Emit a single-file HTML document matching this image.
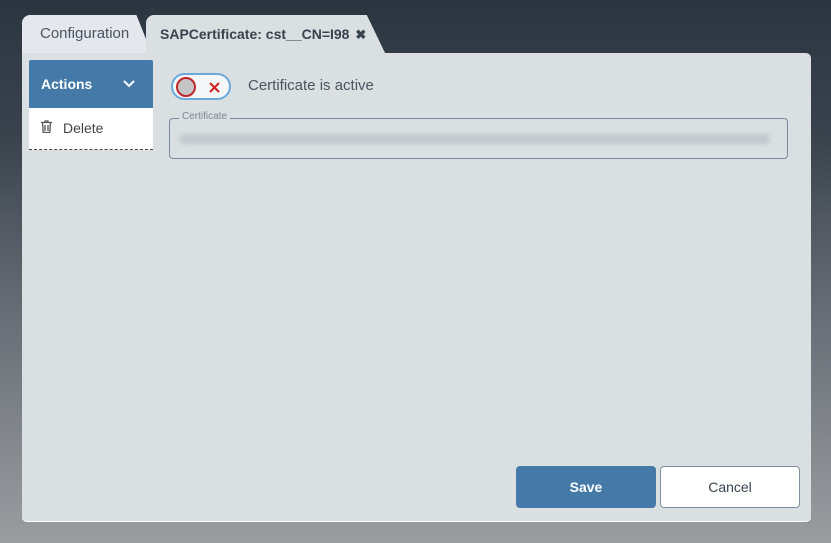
<!DOCTYPE html>
<html><head><style>
*{box-sizing:border-box;margin:0;padding:0}
body{width:831px;height:543px;overflow:hidden;font-family:"Liberation Sans",sans-serif;background:linear-gradient(180deg,#2b3540 0%,#3a434d 25%,#6a7078 60%,#9a9da0 100%);position:relative}
.tab1{position:absolute;left:22px;top:15px;width:130px;height:39px;background:#e4e7ee;color:#4a5560;font-size:15px;padding:10px 0 0 18px;clip-path:polygon(0 0,88% 0,100% 100%,0 100%);border-radius:8px 8px 0 0}
.tab2{position:absolute;left:146px;top:15px;width:240px;height:40px;background:#dadfe2;border-radius:8px 8px 0 0;clip-path:polygon(0 0,92% 0,100% 100%,0 100%);color:#39434d;font-size:14px;font-weight:bold;padding:11px 0 0 14px;white-space:nowrap}
.panel{position:absolute;left:22px;top:53px;width:789px;height:468px;background:#dadfe2;border-radius:0 5px 5px 5px;box-shadow:0 1px 0 #fff}
.act{position:absolute;left:29px;top:60px;width:124px;height:48px;background:#4579a7;color:#fff;font-weight:bold;font-size:14px;padding:16px 0 0 12px;border-radius:2px 2px 0 0}
.del{position:absolute;left:29px;top:108px;width:124px;height:42px;background:#fff;border-bottom:1px dashed #444;color:#444;font-size:14px;padding:12px 0 0 34px}
.tog{position:absolute;left:171px;top:73px;width:60px;height:27px;border:2px solid #6aa9dd;border-radius:14px;background:#f4f6f8}
.knob{position:absolute;left:3px;top:2px;width:20px;height:20px;border-radius:50%;background:#c4c4c4;border:2px solid #c0262a}
.lbl{position:absolute;left:248px;top:77px;font-size:15px;color:#4a5560}
.fs{position:absolute;left:169px;top:118px;width:619px;height:41px;border:1px solid #7a8a9c;border-radius:4px}
.leg{position:absolute;left:179px;top:111px;font-size:10px;color:#7a8896;background:#dadfe2;padding:0 3px}
.blur{position:absolute;left:180px;top:134px;width:590px;height:10px;background:#c2c8cd;border-radius:4px;filter:blur(2px)}
.save{position:absolute;left:516px;top:466px;width:140px;height:42px;background:#4579a7;border-radius:4px;color:#fff;font-weight:bold;font-size:14px;text-align:center;line-height:42px}
.cancel{position:absolute;left:660px;top:466px;width:140px;height:42px;background:#fff;border:1px solid #7f8fa0;border-radius:4px;color:#39434d;font-size:14px;text-align:center;line-height:40px}
</style></head><body>
<div class="tab1">Configuration</div>
<div class="tab2">SAPCertificate: cst__CN=I98 <span style="font-size:13px;margin-left:2px">✖</span></div>
<div class="panel"></div>
<div class="act">Actions<svg style="position:absolute;left:94px;top:20px" width="12" height="8" viewBox="0 0 12 8"><path d="M1 1l5 5 5-5" stroke="#fff" stroke-width="2" fill="none"/></svg></div>
<div class="del"><svg style="position:absolute;left:12px;top:12px" width="11" height="13" viewBox="0 0 11 13"><path d="M0 2.5h11M4 2.5V1h3v1.5M1.5 2.5l.7 10h6.6l.7-10M4 5v6M7 5v6" stroke="#555" stroke-width="1.3" fill="none"/></svg>Delete</div>
<div class="tog"><div class="knob"></div><svg style="position:absolute;left:36px;top:7px" width="11" height="11" viewBox="0 0 11 11"><path d="M1 1l9 9M10 1l-9 9" stroke="#d02020" stroke-width="2"/></svg></div>
<div class="lbl">Certificate is active</div>
<div class="fs"></div>
<div class="leg">Certificate</div>
<div class="blur"></div>
<div class="save">Save</div>
<div class="cancel">Cancel</div>
</body></html>
